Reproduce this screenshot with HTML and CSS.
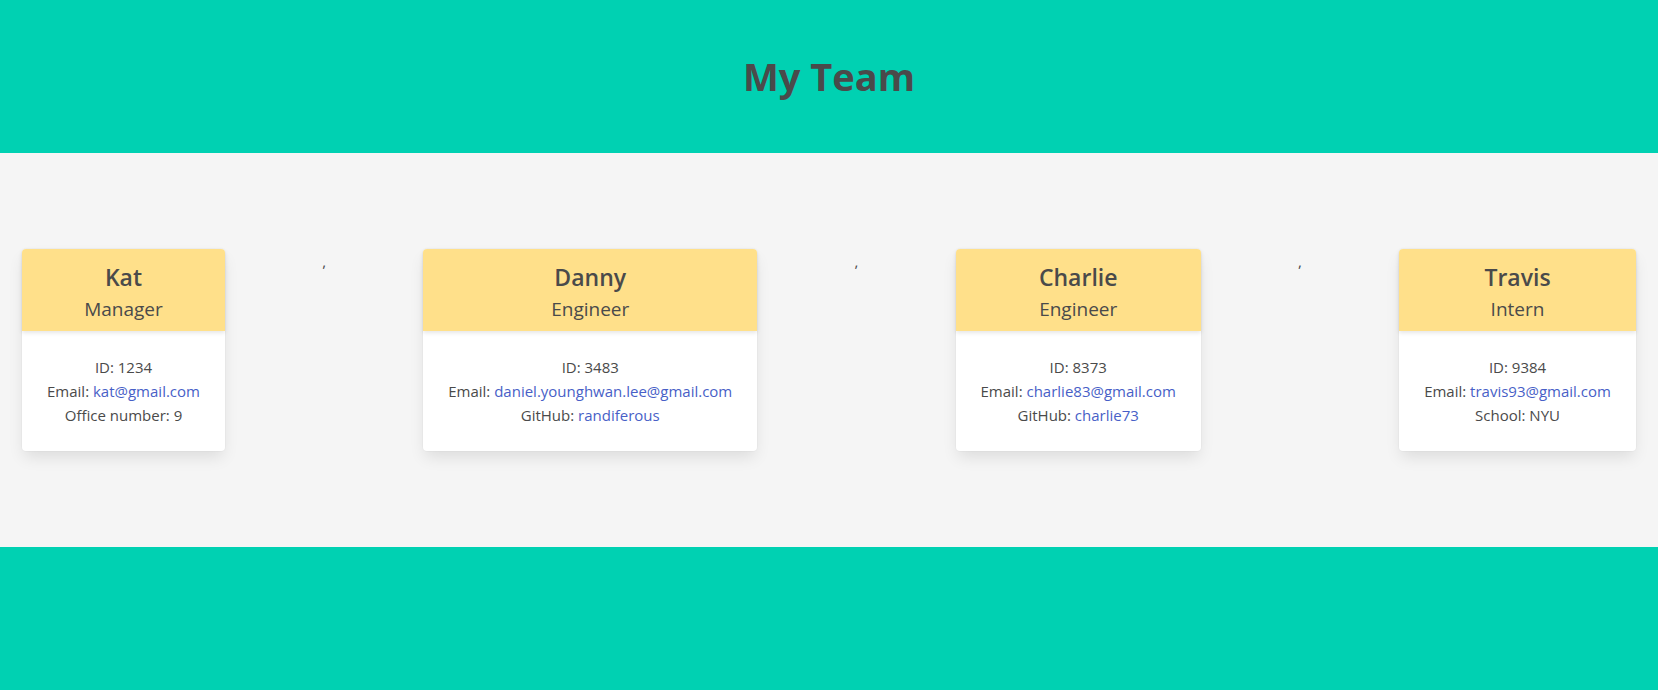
FILE: index.html
```html
<!DOCTYPE html>
<html lang="en">
<head>
  <meta charset="UTF-8">
  <meta name="viewport" content="width=device-width, initial-scale=1">
  <title>My Team</title>
  <link rel="stylesheet" href="styles.css">
</head>
<body>
  <header class="hero">
    <h1 class="title">My Team</h1>
  </header>
  <main class="team">
    <article class="card">
      <header class="card-header">
        <h2 class="name">Kat</h2>
        <p class="role">Manager</p>
      </header>
      <ul class="card-content">
        <li>ID: 1234</li>
        <li>Email: <a href="mailto:kat@gmail.com">kat@gmail.com</a></li>
        <li>Office number: 9</li>
      </ul>
    </article>
    <span class="separator">,</span>
    <article class="card">
      <header class="card-header">
        <h2 class="name">Danny</h2>
        <p class="role">Engineer</p>
      </header>
      <ul class="card-content">
        <li>ID: 3483</li>
        <li>Email: <a href="mailto:daniel.younghwan.lee@gmail.com">daniel.younghwan.lee@gmail.com</a></li>
        <li>GitHub: <a href="https://github.com/randiferous">randiferous</a></li>
      </ul>
    </article>
    <span class="separator">,</span>
    <article class="card">
      <header class="card-header">
        <h2 class="name">Charlie</h2>
        <p class="role">Engineer</p>
      </header>
      <ul class="card-content">
        <li>ID: 8373</li>
        <li>Email: <a href="mailto:charlie83@gmail.com">charlie83@gmail.com</a></li>
        <li>GitHub: <a href="https://github.com/charlie73">charlie73</a></li>
      </ul>
    </article>
    <span class="separator">,</span>
    <article class="card">
      <header class="card-header">
        <h2 class="name">Travis</h2>
        <p class="role">Intern</p>
      </header>
      <ul class="card-content">
        <li>ID: 9384</li>
        <li>Email: <a href="mailto:travis93@gmail.com">travis93@gmail.com</a></li>
        <li>School: NYU</li>
      </ul>
    </article>
  </main>
</body>
</html>
```
FILE: styles.css
```css
* {
  box-sizing: border-box;
  margin: 0;
  padding: 0;
}

body {
  min-height: 100vh;
  background: #00d1b2;
  color: #4a4a4a;
  font-family: "Segoe UI", "Open Sans", "Noto Sans", sans-serif;
  font-size: 15px;
  line-height: 24px;
}

.hero {
  padding: 52px 24px;
  text-align: center;
}

.title {
  font-size: 38px;
  font-weight: 700;
  line-height: 49px;
}

.team {
  display: flex;
  justify-content: space-between;
  padding: 96px 22px;
  background: #f5f5f5;
}

.card {
  border-radius: 4px;
  background: #fff;
  box-shadow: 0 8px 16px -2px rgba(10, 10, 10, 0.1), 0 0 0 1px rgba(10, 10, 10, 0.02);
  text-align: center;
}

.card-header {
  padding: 12px 12px 6px;
  border-radius: 4px 4px 0 0;
  background: #ffe08a;
  box-shadow: 0 2px 4px rgba(10, 10, 10, 0.1);
}

.name {
  font-size: 23px;
  font-weight: 600;
  line-height: 32px;
}

.role {
  font-size: 19px;
  line-height: 32px;
}

.card-content {
  padding: 24px 25px;
  list-style: none;
}

.card-content a {
  color: #485fc7;
  text-decoration: none;
}
```
